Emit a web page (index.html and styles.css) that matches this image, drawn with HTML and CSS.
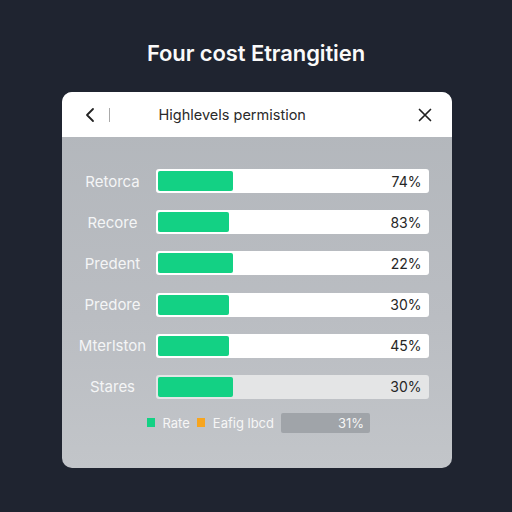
FILE: index.html
```html
<!DOCTYPE html>
<html>
<head>
<meta charset="utf-8">
<link rel="stylesheet" href="styles.css">
</head>
<body>
<div class="page">
  <h1 class="title">Four cost Etrangitien</h1>
  <div class="card">
    <div class="card-head">
      <svg class="back" width="14" height="16" viewBox="0 0 14 16"><path d="M9 2 L3 8 L9 14" fill="none" stroke="#222" stroke-width="1.8" stroke-linecap="round" stroke-linejoin="round"/></svg>
      <span class="divider"></span>
      <span class="head-title">Highlevels permistion</span>
      <svg class="close" width="16" height="16" viewBox="0 0 16 16"><path d="M2.5 2.5 L13.5 13.5 M13.5 2.5 L2.5 13.5" fill="none" stroke="#222" stroke-width="1.7" stroke-linecap="round"/></svg>
    </div>
    <div class="card-body">
      <div class="rows">
        <div class="row"><span class="label">Retorca</span><div class="bar"><div class="fill" style="width:75px"></div><span class="pct">74%</span></div></div>
        <div class="row"><span class="label">Recore</span><div class="bar"><div class="fill" style="width:71px"></div><span class="pct">83%</span></div></div>
        <div class="row"><span class="label">Predent</span><div class="bar"><div class="fill" style="width:75px"></div><span class="pct">22%</span></div></div>
        <div class="row"><span class="label">Predore</span><div class="bar"><div class="fill" style="width:71px"></div><span class="pct">30%</span></div></div>
        <div class="row"><span class="label">Mterlston</span><div class="bar"><div class="fill" style="width:71px"></div><span class="pct">45%</span></div></div>
        <div class="row"><span class="label">Stares</span><div class="bar bar-muted"><div class="fill" style="width:75px"></div><span class="pct">30%</span></div></div>
      </div>
      <div class="legend">
        <span class="swatch green"></span><span class="legend-text">Rate</span>
        <span class="swatch orange"></span><span class="legend-text">Eafig lbcd</span>
        <span class="legend-box">31%</span>
      </div>
    </div>
  </div>
</div>
</body>
</html>
```

FILE: styles.css
```css
* { box-sizing: border-box; }
html, body { margin: 0; padding: 0; }
body {
  width: 512px;
  height: 512px;
  background: #1f2430;
  font-family: Inter, "Noto Sans", sans-serif;
  overflow: hidden;
}
.page {
  display: flex;
  flex-direction: column;
  align-items: center;
  padding-top: 38px;
}
.title {
  margin: 0;
  color: #fafafa;
  font-size: 22px;
  font-weight: 600;
  line-height: 30px;
  letter-spacing: -0.1px;
}
.card {
  margin-top: 24px;
  margin-left: 1px;
  width: 390px;
  height: 376px;
  border-radius: 10px;
  overflow: hidden;
  display: flex;
  flex-direction: column;
  background: linear-gradient(180deg, #b2b6bb 0%, #babdc2 60%, #c2c5c9 100%);
}
.card-head {
  height: 45px;
  background: #ffffff;
  display: flex;
  align-items: center;
  padding-left: 22px;
  padding-right: 19px;
  flex: none;
}
.back { flex: none; }
.divider {
  width: 1px;
  height: 14px;
  background: #aaa;
  margin-left: 11px;
}
.head-title {
  margin-left: 49px;
  font-size: 14.5px;
  color: #2a2a2a;
  flex: 1;
}
.close { flex: none; }
.card-body {
  padding: 32px 23px 0 8px;
  display: flex;
  flex-direction: column;
}
.rows {
  display: flex;
  flex-direction: column;
  gap: 17.2px;
}
.row {
  display: flex;
  align-items: center;
  height: 24px;
}
.label {
  width: 86px;
  text-align: center;
  color: #f4f5f6;
  font-size: 15px;
  flex: none;
}
.bar {
  flex: 1;
  height: 24px;
  background: #ffffff;
  border-radius: 3px;
  display: flex;
  align-items: center;
  padding: 2px;
}
.bar-muted { background: #e4e5e6; }
.fill {
  height: 20px;
  background: #13d184;
  border-radius: 2px;
}
.pct {
  margin-left: auto;
  margin-right: 5px;
  font-size: 14px;
  color: #262626;
}
.legend {
  display: flex;
  align-items: center;
  margin-top: 14px;
  padding-left: 77px;
  height: 20px;
}
.swatch {
  width: 8px;
  height: 9px;
  flex: none;
}
.green { background: #13d184; }
.orange { background: #f7a51f; }
.legend-text {
  color: #f6f6f6;
  font-size: 13px;
  margin-left: 8px;
  margin-right: 7px;
}
.legend-box {
  width: 89px;
  height: 20px;
  background: #a0a4a9;
  border-radius: 2px;
  color: #f5f5f5;
  font-size: 13px;
  text-align: right;
  padding-right: 6px;
  line-height: 20px;
}
```
